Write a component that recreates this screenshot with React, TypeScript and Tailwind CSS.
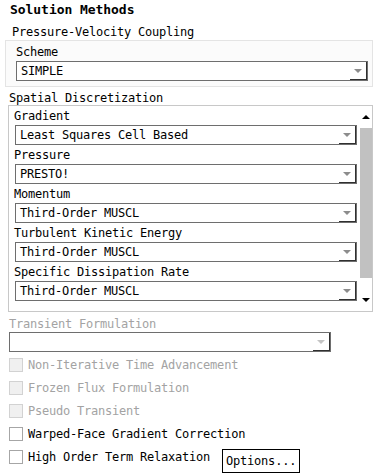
import React from "react";

function Caret({ light }: { light?: boolean }) {
  return (
    <div
      className={`h-0 w-0 border-x-[4px] border-t-[4px] border-x-transparent ${
        light ? "border-t-[#c4c4c4]" : "border-t-[#8c8c8c]"
      }`}
    />
  );
}

function Select({ value, className = "", disabled }: { value: string; className?: string; disabled?: boolean }) {
  return (
    <div className={`flex h-[20px] border border-[#6e6e6e] bg-white ${className}`}>
      <div className="flex-1 truncate pl-[4px] leading-[18px]">{value}</div>
      <div className="flex w-[17px] items-center justify-center border-b border-r border-[#303030]">
        <Caret light={disabled} />
      </div>
    </div>
  );
}

function Check({ label, disabled, children }: { label: string; disabled?: boolean; children?: React.ReactNode }) {
  return (
    <div className="flex h-[23px] items-start pl-[9px]">
      <div
        className={`h-[14px] w-[14px] border ${
          disabled ? "border-[#d2d2d2] bg-[#f0f0f0]" : "border-[#a6a6a6] bg-white"
        }`}
      />
      <span className={`ml-[5px] leading-[14px] ${disabled ? "text-[#a3a3a3]" : "text-black"}`}>{label}</span>
      {children}
    </div>
  );
}

const rows = [
  ["Gradient", "Least Squares Cell Based"],
  ["Pressure", "PRESTO!"],
  ["Momentum", "Third-Order MUSCL"],
  ["Turbulent Kinetic Energy", "Third-Order MUSCL"],
  ["Specific Dissipation Rate", "Third-Order MUSCL"],
];

export default function App() {
  return (
    <div className="h-[475px] w-[383px] overflow-hidden bg-white font-['DejaVu_Sans_Mono',monospace] text-[12px] tracking-[-0.22px] text-black">
      <div className="pl-[10px] pt-[2px] text-[13px] font-bold leading-[16px] tracking-[-0.05px]">Solution Methods</div>
      <div className="mt-[7px] pl-[12px] leading-[14px]">Pressure-Velocity Coupling</div>

      <div className="ml-[5px] mt-[1px] h-[47px] w-[368px] border border-[#e4e4e4] bg-[#fbfbfb] pl-[10px] pt-[3px]">
        <div className="leading-[16px]">Scheme</div>
        <Select value="SIMPLE" className="mt-[1px] w-[352px]" />
      </div>

      <div className="mt-[4px] pl-[9px] leading-[14px]">Spatial Discretization</div>
      <div className="ml-[8px] flex h-[207px] w-[365px] border border-[#c8c8c8]">
        <div className="flex-1 pr-[3px]">
          {rows.map(([label, value]) => (
            <div key={label}>
              <div className="h-[19px] pl-[5px] leading-[20px]">{label}</div>
              <Select value={value} className="ml-[6px]" />
            </div>
          ))}
        </div>
        <div className="flex w-[12px] flex-col">
          <div className="flex h-[22px] items-center justify-center">
            <div className="h-0 w-0 border-x-[4px] border-b-[4px] border-x-transparent border-b-black" />
          </div>
          <div className="h-[150px] bg-[#c1c1c1]" />
          <div className="flex-1" />
          <div className="flex h-[22px] items-center justify-center">
            <div className="h-0 w-0 border-x-[4px] border-t-[4px] border-x-transparent border-t-black" />
          </div>
        </div>
      </div>

      <div className="mt-[5px] pl-[9px] leading-[15px] text-[#a3a3a3]">Transient Formulation</div>
      <Select value="" disabled className="ml-[9px] w-[322px]" />

      <div className="mt-[6px]">
        <Check label="Non-Iterative Time Advancement" disabled />
        <Check label="Frozen Flux Formulation" disabled />
        <Check label="Pseudo Transient" disabled />
        <Check label="Warped-Face Gradient Correction" />
        <Check label="High Order Term Relaxation">
          <div className="-mt-[1px] ml-[12px] flex h-[24px] w-[78px] items-center justify-center border border-black leading-[14px]">
            Options...
          </div>
        </Check>
      </div>
    </div>
  );
}
